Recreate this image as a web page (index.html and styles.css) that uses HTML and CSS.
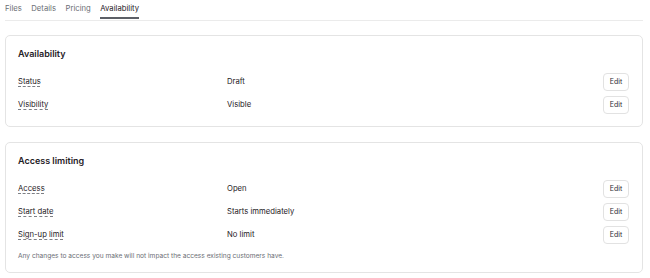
FILE: index.html
```html
<!DOCTYPE html>
<html>

<head>
  <link rel="stylesheet" href="styles.css">
</head>

<body>

  <nav class="tabs">
    <a class="tab">Files</a>
    <a class="tab">Details</a>
    <a class="tab">Pricing</a>
    <a class="tab active">Availability</a>
  </nav>

  <section class="card">
    <h2>Availability</h2>
    <div class="row">
      <span class="label">Status</span>
      <span class="value">Draft</span>
      <button class="edit">Edit</button>
    </div>
    <div class="row">
      <span class="label">Visibility</span>
      <span class="value">Visible</span>
      <button class="edit">Edit</button>
    </div>
  </section>

  <section class="card">
    <h2>Access limiting</h2>
    <div class="row">
      <span class="label">Access</span>
      <span class="value">Open</span>
      <button class="edit">Edit</button>
    </div>
    <div class="row">
      <span class="label">Start date</span>
      <span class="value">Starts immediately</span>
      <button class="edit">Edit</button>
    </div>
    <div class="row">
      <span class="label">Sign-up limit</span>
      <span class="value">No limit</span>
      <button class="edit">Edit</button>
    </div>
    <p class="note">Any changes to access you make will not impact the access existing customers have.</p>
  </section>

</body>

</html>
```

FILE: styles.css
```css
body {
  margin: 0;
  padding: 0 7px 0 5px;
  font-family: Inter, "Noto Sans", sans-serif;
  font-size: 7.7px;
  color: #1f2126;
  background-color: #ffffff;
}

.tabs {
  display: flex;
  gap: 9.5px;
  height: 20px;
  border-bottom: 1px solid #ebebeb;
}

.tab {
  display: flex;
  align-items: center;
  height: 18px;
  color: #6b6e75;
  border-bottom: 2px solid transparent;
  margin-top: -1px;
}

.tab.active {
  color: #1f2126;
  border-bottom-color: #5c5f66;
}

.card {
  border: 1px solid #e4e4e4;
  border-radius: 5px;
  padding: 11px 13px 10px 12px;
  margin-top: 14px;
}

.card + .card {
  margin-top: 15px;
}

h2 {
  margin: 0 0 9px 0;
  font-size: 9px;
  font-weight: 600;
  line-height: 14px;
}

.row {
  display: grid;
  grid-template-columns: 209px 1fr auto;
  align-items: center;
  height: 23px;
}

.label {
  justify-self: start;
  text-decoration: underline dashed #7d7f85;
  text-underline-offset: 2px;
  text-decoration-thickness: 1px;
}

.edit {
  font-family: inherit;
  font-size: 7px;
  color: #2a2c31;
  background-color: #ffffff;
  border: 1px solid #e2e2e2;
  border-radius: 4px;
  height: 18px;
  width: 26px;
  padding: 0;
}

.note {
  margin: 5px 0 1px 0;
  font-size: 6.6px;
  line-height: 10px;
  color: #6b6e75;
}
```
